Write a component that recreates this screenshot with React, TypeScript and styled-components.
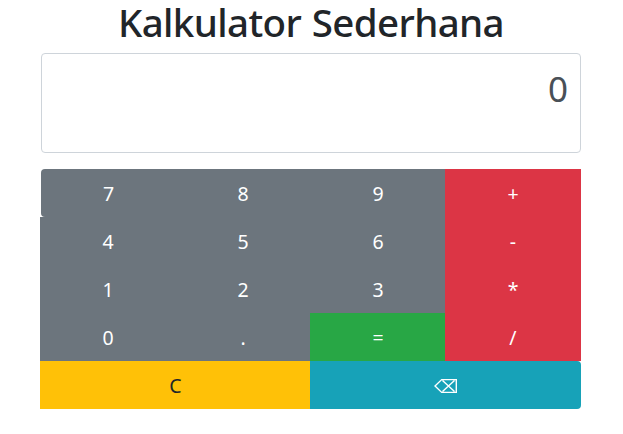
import React from "react";
import styled, { createGlobalStyle } from "styled-components";

const GlobalStyle = createGlobalStyle`
  *, *::before, *::after { box-sizing: border-box; }
  body {
    margin: 0;
    background: #fff;
    color: #212529;
    font-family: "Segoe UI", "Noto Sans", "Open Sans", sans-serif;
    overflow: hidden;
  }
`;

const Calculator = styled.main`
  width: 540px;
  margin-left: 41px;
`;

const Title = styled.h1`
  margin: 0;
  height: 53px;
  font-size: 38.5px;
  font-weight: 500;
  line-height: 44px;
  letter-spacing: -0.62px;
  word-spacing: 1.2px;
  text-align: center;
  white-space: nowrap;
`;

const Display = styled.output`
  display: block;
  height: 100px;
  margin-bottom: 16px;
  padding: 8px 12px;
  border: 1px solid #ced4da;
  border-radius: 4px;
  color: #495057;
  font-size: 35px;
  font-weight: 400;
  line-height: 54px;
  text-align: right;
`;

const Row = styled.div<{ $inset?: boolean }>`
  display: flex;
  height: 48px;
  margin-left: ${({ $inset }) => ($inset ? "0" : "-1px")};
`;

const tones = {
  number: ["#6c757d", "#fff"],
  operator: ["#dc3545", "#fff"],
  equals: ["#28a745", "#fff"],
  clear: ["#ffc107", "#212529"],
  erase: ["#17a2b8", "#fff"],
};

type Tone = keyof typeof tones;

const Key = styled.button<{ $tone: Tone; $width: number; $radius?: string }>`
  flex: 0 0 ${({ $width }) => $width}px;
  height: 48px;
  padding: 1px 0 0 ${({ $tone }) => ($tone === "operator" ? "0" : "1px")};
  border: 0;
  border-radius: ${({ $radius }) => $radius ?? "0"};
  background: ${({ $tone }) => tones[$tone][0]};
  color: ${({ $tone }) => tones[$tone][1]};
  font-family: inherit;
  font-size: 19.5px;
  font-weight: 400;
  line-height: 30px;
  cursor: pointer;
`;

const EraseIcon = styled.svg`
  display: block;
  margin: 0 auto;
`;

const rows = [
  ["7", "8", "9", "+"],
  ["4", "5", "6", "-"],
  ["1", "2", "3", "*"],
  ["0", ".", "=", "/"],
];

const toneOf = (label: string): Tone =>
  label === "=" ? "equals" : "+-*/".includes(label) ? "operator" : "number";

export default function App() {
  return (
    <>
      <GlobalStyle />
      <Calculator>
        <Title>Kalkulator Sederhana</Title>
        <Display>0</Display>
        {rows.map((row, r) => (
          <Row key={r} $inset={r === 0}>
            {row.map((label, c) => (
              <Key
                key={label}
                $tone={toneOf(label)}
                $width={c === 3 ? 136 : r === 0 && c === 0 ? 134 : 135}
                $radius={r === 0 && c === 0 ? "4px 0 0 4px" : undefined}
              >
                {label}
              </Key>
            ))}
          </Row>
        ))}
        <Row>
          <Key $tone="clear" $width={270}>C</Key>
          <Key $tone="erase" $width={271} $radius="0 4px 4px 0" aria-label="Backspace">
            <EraseIcon width="24" height="16" viewBox="0 0 24 16" fill="none" stroke="#fff" strokeWidth="1.4">
              <path d="M1 8 7.7 1.6H22.3V14.4H7.7ZM8.5 2.5 20.5 13.5M20.5 2.5 8.5 13.5" />
            </EraseIcon>
          </Key>
        </Row>
      </Calculator>
    </>
  );
}
